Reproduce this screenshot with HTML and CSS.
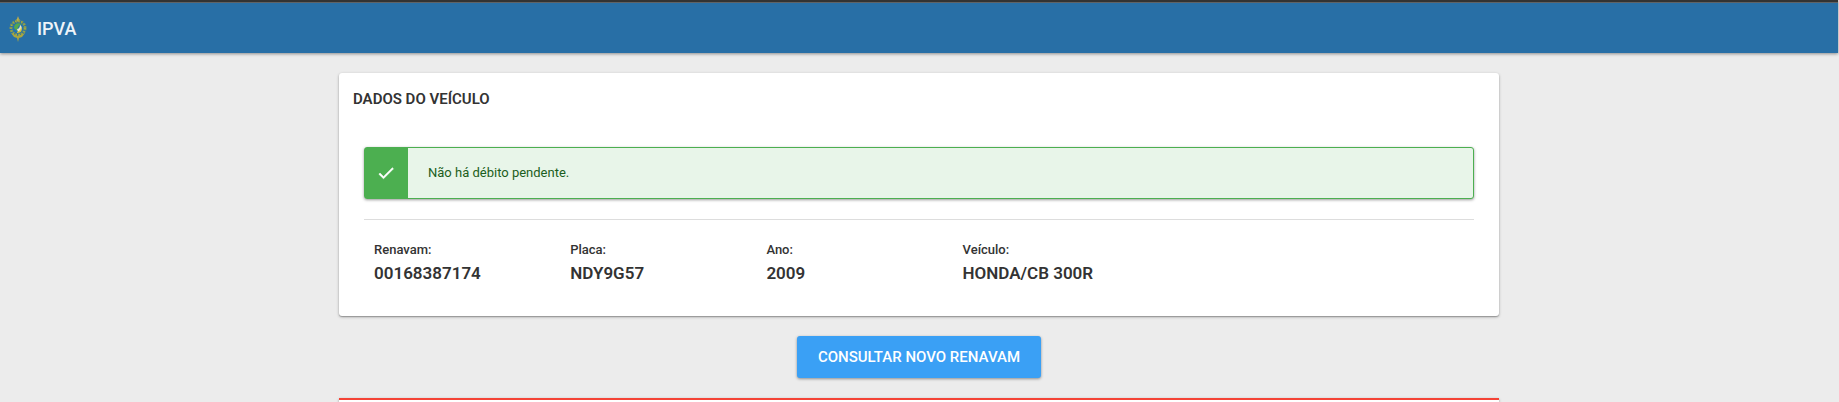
FILE: index.html
```html
<!DOCTYPE html>
<html lang="pt-BR">
<head>
  <meta charset="UTF-8" />
  <meta name="viewport" content="width=device-width, initial-scale=1.0"/>
  <title>IPVA</title>
  <link rel="stylesheet" href="styles.css">
</head>
<body>
  <header class="topbar">
    <svg class="logo" viewBox="0 0 18 26" aria-hidden="true">
      <path d="M9 0l1 3 1 1-2 2-2-2 1-1z" fill="#c4b04a"/>
      <circle cx="9" cy="12" r="7" fill="none" stroke="#7f9a52" stroke-width="3" stroke-dasharray="2 1"/>
      <circle cx="9" cy="12" r="7" fill="none" stroke="#c9b23c" stroke-width="1" stroke-dasharray="1 2"/>
      <path d="M2 17l5 2 2 1 2-1 5-2-3 4-3 1-1 4-1-4-3-1z" fill="#a9a63f"/>
      <circle cx="9" cy="12" r="5" fill="#2374b5"/>
      <path d="M5 12c0-5 5-6 8-3-3-1-4 2-5 6z" fill="#55a84d"/>
      <path d="M8 13c2 0 3-2 3-4 3 2 2 6-2 7z" fill="#e6e8c9"/>
      <path d="M8 16c3-1 4-3 4-5 2 3 0 6-4 6z" fill="#e1c52f"/>
    </svg>
    <span class="brand">IPVA</span>
  </header>

  <main class="container">
    <section class="card">
      <h1 class="card-title">Dados do Veículo</h1>

      <div class="card-body">
        <div class="alert" role="status">
          <span class="alert-icon">
            <svg viewBox="0 0 24 24" aria-hidden="true">
              <path d="M9 16.17L4.83 12l-1.42 1.41L9 19 21 7l-1.41-1.41z"/>
            </svg>
          </span>
          <p class="alert-text">Não há débito pendente.</p>
        </div>

        <dl class="vehicle">
          <div>
            <dt>Renavam:</dt>
            <dd>00168387174</dd>
          </div>
          <div>
            <dt>Placa:</dt>
            <dd>NDY9G57</dd>
          </div>
          <div>
            <dt>Ano:</dt>
            <dd>2009</dd>
          </div>
          <div>
            <dt>Veículo:</dt>
            <dd>HONDA/CB 300R</dd>
          </div>
        </dl>
      </div>
    </section>

    <button type="button" class="btn">Consultar novo Renavam</button>

    <section class="card card-notice"></section>
  </main>
</body>
</html>
```

FILE: styles.css
```css
* {
  box-sizing: border-box;
}

body {
  margin: 0;
  padding-right: 1px;
  font-family: Roboto, "Liberation Sans", sans-serif;
  font-size: 13px;
  color: #333;
  background: #ececec;
}

.topbar {
  display: flex;
  align-items: center;
  gap: 10px;
  height: 53px;
  padding: 2px 9px 0;
  border-top: 2px solid #333;
  color: #eef4f9;
  background: #286fa6;
  box-shadow: inset 0 1px 0 #5f6366, 0 1px 3px rgba(0, 0, 0, 0.4);
}

.logo {
  width: 18px;
  height: 26px;
}

.brand {
  font-size: 18px;
  font-weight: 500;
}

.container {
  display: flex;
  flex-direction: column;
  align-items: center;
  gap: 20px;
  max-width: 1160px;
  margin: 20px auto 0;
}

.card {
  width: 100%;
  border-radius: 3px;
  background: #fff;
  box-shadow: 0 1px 3px rgba(0, 0, 0, 0.3), 0 1px 1px rgba(0, 0, 0, 0.2);
}

.card-title {
  margin: 0;
  padding: 16px 14px 0;
  font-size: 15px;
  font-weight: 600;
  line-height: 20px;
  text-transform: uppercase;
}

.card-body {
  padding: 38px 25px 30px;
}

.alert {
  display: flex;
  height: 52px;
  border: 1px solid #4caf50;
  border-radius: 3px;
  color: #1b5e20;
  background: #e8f5e9;
  box-shadow: 0 1px 3px rgba(0, 0, 0, 0.4);
}

.alert-icon {
  display: flex;
  align-items: center;
  justify-content: center;
  width: 43px;
  padding-right: 2px;
  background: #4caf50;
}

.alert-icon svg {
  width: 20px;
  height: 20px;
  fill: #fff;
  stroke: #fff;
  stroke-width: 0.6;
}

.alert-text {
  margin: 0;
  padding: 0 20px;
  line-height: 50px;
}

.vehicle {
  display: grid;
  grid-template-columns: 18% 18% 18% 1fr;
  margin: 20px 0 0;
  padding: 20px 10px 0;
  border-top: 1px solid #ddd;
}

.vehicle dt {
  font-weight: 500;
  line-height: 20px;
}

.vehicle dd {
  margin: 0;
  font-size: 17px;
  font-weight: 600;
  line-height: 26px;
}

.btn {
  height: 42px;
  padding: 0 21px;
  border: 0;
  border-radius: 3px;
  font-family: inherit;
  font-size: 15px;
  font-weight: 500;
  text-transform: uppercase;
  color: #fff;
  background: #3aa0f5;
  box-shadow: 0 1px 3px rgba(0, 0, 0, 0.4);
  cursor: pointer;
}

.card-notice {
  min-height: 4px;
  border-top: 2px solid #f44336;
  border-radius: 0;
}
```
